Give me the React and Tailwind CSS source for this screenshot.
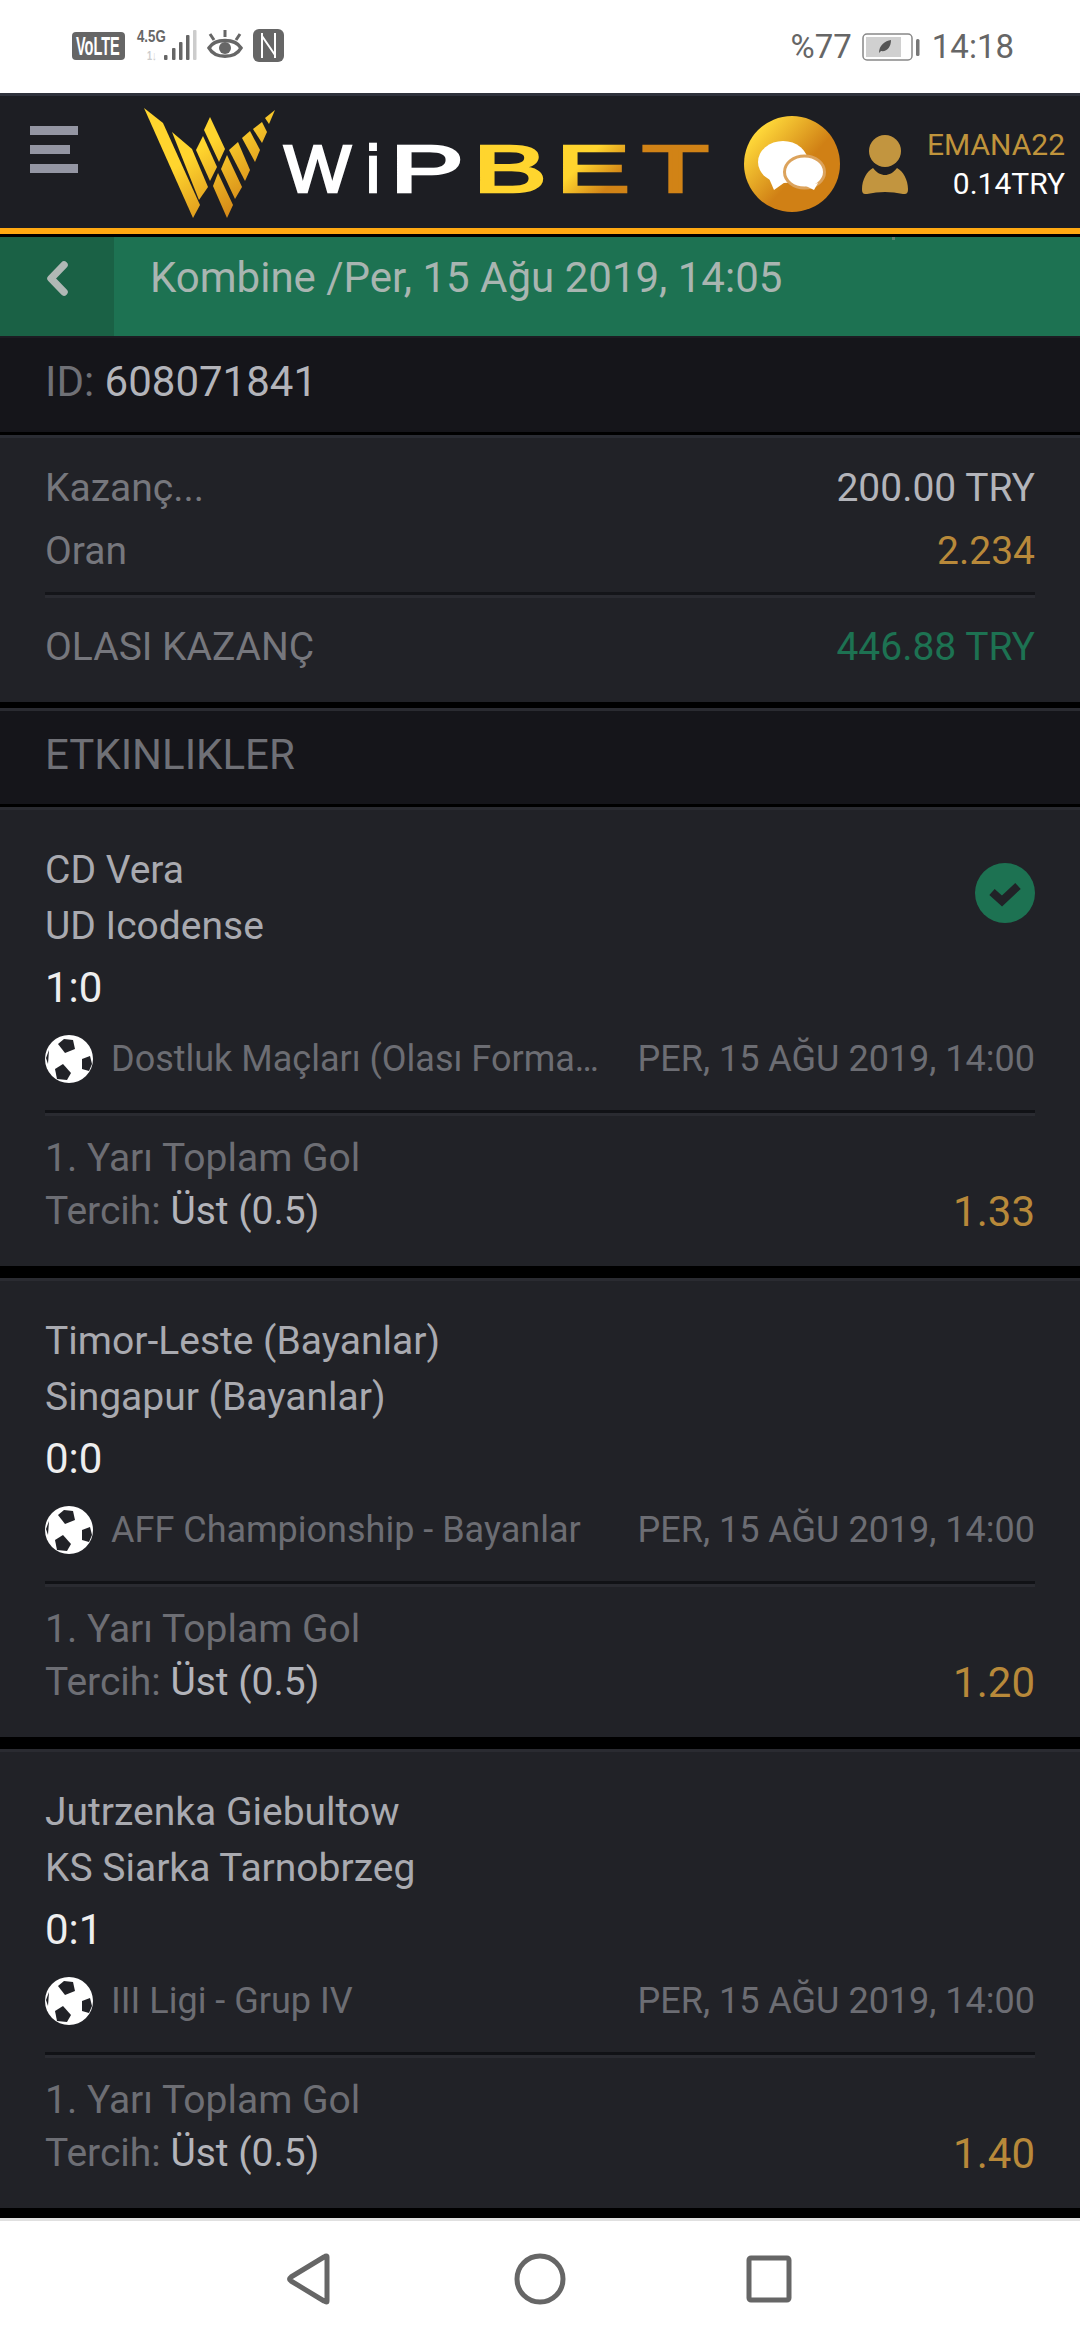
import React from 'react';

const bets = [
  {
    home: 'CD Vera',
    away: 'UD Icodense',
    score: '1:0',
    league: 'Dostluk Maçları (Olası Forma…',
    odd: '1.33',
    won: true,
  },
  {
    home: 'Timor-Leste (Bayanlar)',
    away: 'Singapur (Bayanlar)',
    score: '0:0',
    league: 'AFF Championship - Bayanlar',
    odd: '1.20',
  },
  {
    home: 'Jutrzenka Giebultow',
    away: 'KS Siarka Tarnobrzeg',
    score: '0:1',
    league: 'III Ligi - Grup IV',
    odd: '1.40',
  },
];

// Stripes of the emblem, in page coordinates
const emblem = [
  '144,108 163,123 200,205 193,218',
  '172,132 192,149 208,187 199,200',
  '203,136 196,150 210,181 217,167',
  '210,117 204,130 219,162 225,149',
  '218,173 213,186 227,218 233,205',
  '227,155 221,169 235,199 242,187',
  '238,142 229,150 245,181 250,170',
  '250,131 242,138 255,162 260,150',
  '262,122 253,129 262,143 267,132',
  '275,110 265,118 269,124',
];

const wordmark = [
  { ch: 'W', x: 284, w: 67, fill: '#ffffff' },
  { ch: 'i', x: 366, w: 14, fill: '#ffffff' },
  { ch: 'P', x: 390, w: 74, fill: '#ffffff' },
  { ch: 'B', x: 473, w: 74, fill: '#ffd52e' },
  { ch: 'E', x: 556, w: 74, fill: 'url(#wipE)' },
  { ch: 'T', x: 642, w: 67, fill: '#d18316' },
];

const StatusBar = () => (
  <div className="flex h-[93px] items-start justify-between bg-white pl-[72px] pr-[66px]">
    <svg width="212" height="56" viewBox="72 16 212 56" className="mt-[16px] overflow-visible">
      <rect x="72" y="32" width="53" height="28" rx="4" fill="#666666" />
      <text transform="translate(76 55) scale(0.58 1)" fill="#ffffff" fontFamily="Liberation Sans" fontWeight="700" fontSize="25">VoLTE</text>
      <text transform="translate(137 42) scale(0.78 1)" fill="#666666" fontFamily="Liberation Sans" fontWeight="700" fontSize="17">4.5G</text>
      <text transform="translate(147 60) scale(0.7 1)" fill="#cccccc" fontFamily="Liberation Sans" fontWeight="700" fontSize="13">1↓</text>
      <rect x="164" y="55" width="3.5" height="5" rx="1" fill="#666666" />
      <rect x="172" y="48" width="3.5" height="12" rx="1" fill="#666666" />
      <rect x="179" y="42" width="3.5" height="18" rx="1" fill="#666666" />
      <rect x="186" y="35" width="3.5" height="25" rx="1" fill="#666666" />
      <rect x="193" y="30" width="3.5" height="30" rx="1" fill="#cccccc" />
      <path d="M209 48 C215 38 235 38 241 48 C235 59 215 59 209 48 Z" fill="none" stroke="#666666" strokeWidth="3.5" />
      <circle cx="225" cy="48" r="6" fill="#666666" />
      <path d="M225 37 V30 M214 40 L210 34 M236 40 L240 34" stroke="#666666" strokeWidth="3" fill="none" />
      <rect x="253" y="29" width="31" height="33" rx="6" fill="#666666" />
      <path d="M262 33 V58 M275 33 V58 M262 36 L275 55" stroke="#ffffff" strokeWidth="2" fill="none" />
    </svg>
    <div className="mt-[24px] flex items-center text-[33px] leading-[46px] text-[#666666]">
      <span>%77</span>
      <svg width="58" height="28" viewBox="0 0 58 28" className="ml-[10px] mr-[12px]">
        <rect x="1" y="1" width="49" height="26" rx="4" fill="none" stroke="#888888" strokeWidth="1.5" />
        <rect x="4" y="4" width="35" height="20" fill="#d0d0d0" />
        <rect x="54" y="6" width="3.5" height="17" rx="1.5" fill="#777777" />
        <path d="M17 20 C17 12 23 8 29 7 C29 14 25 19 19 18 Z" fill="#555555" />
      </svg>
      <span>14:18</span>
    </div>
  </div>
);

const Header = () => (
  <div className="flex h-[135px] items-start border-t-[3px] border-[#2f323c] bg-[#1d1e23] pl-[30px] pr-[15px]">
    <div className="mt-[30px] flex w-[48px] flex-col gap-[10px]">
      <div className="h-[9px] w-[48px] bg-[#9496a3]" />
      <div className="h-[9px] w-[40px] bg-[#9496a3]" />
      <div className="h-[9px] w-[48px] bg-[#9496a3]" />
    </div>
    <svg width="575" height="132" viewBox="140 96 575 132" className="ml-[62px]">
      <defs>
        <linearGradient id="wipGold" gradientUnits="userSpaceOnUse" x1="170" y1="120" x2="240" y2="215">
          <stop offset="0.35" stopColor="#ffd52e" />
          <stop offset="1" stopColor="#d18316" />
        </linearGradient>
        <linearGradient id="wipE" gradientUnits="userSpaceOnUse" x1="585" y1="160" x2="610" y2="185">
          <stop offset="0" stopColor="#ffd52e" />
          <stop offset="1" stopColor="#d18316" />
        </linearGradient>
      </defs>
      {emblem.map((points) => (
        <polygon key={points} points={points} fill="url(#wipGold)" />
      ))}
      {wordmark.map((l) => (
        <text
          key={l.ch}
          x={l.x}
          y="192"
          fontFamily="Liberation Sans"
          fontSize="67"
          fill={l.fill}
          stroke={l.fill}
          strokeWidth="2.5"
          textLength={l.w}
          lengthAdjust="spacingAndGlyphs"
        >
          {l.ch}
        </text>
      ))}
    </svg>
    <svg width="96" height="96" viewBox="0 0 96 96" className="ml-[29px] mt-[20px]">
      <defs>
        <linearGradient id="chatGold" x1="0.1" y1="0.1" x2="0.6" y2="0.55">
          <stop offset="0.1" stopColor="#ffd93a" />
          <stop offset="1" stopColor="#d08015" />
        </linearGradient>
      </defs>
      <circle cx="48" cy="48" r="48" fill="url(#chatGold)" />
      <ellipse cx="39" cy="46" rx="25" ry="21" fill="#ffffff" />
      <path d="M24 60 L30 74 L44 64 Z" fill="#ffffff" />
      <ellipse cx="60.5" cy="56" rx="20" ry="16" fill="#ffffff" stroke="#dca35c" strokeWidth="3" />
      <path d="M62 70 L70 74 L74 67 Z" fill="#ffffff" />
    </svg>
    <svg width="48" height="62" viewBox="0 0 48 62" className="ml-[21px] mt-[38px]">
      <circle cx="24" cy="17" r="16" fill="#c2953f" />
      <path d="M1 55 C1 46 6 37 12 34 C16 39 20 41 24 41 C28 41 32 39 36 34 C42 37 47 46 47 55 C47 60 45 60 42 60 Q24 56 6 60 C3 60 1 60 1 55 Z" fill="#c2953f" />
    </svg>
    <div className="ml-auto mt-[29px] text-right text-[30px] leading-[39px]">
      <div className="text-[#c0943c]">EMANA22</div>
      <div className="text-white">0.14TRY</div>
    </div>
  </div>
);

const TitleBar = () => (
  <div className="relative flex h-[99px] bg-[#1d7252]">
    <div className="flex w-[114px] items-center justify-center bg-[#1a6145] pb-[17px]">
      <svg width="21" height="35" viewBox="0 0 21 35">
        <path d="M17 4 L4 17.5 L17 31" fill="none" stroke="#b0b8b5" strokeWidth="7.5" strokeLinecap="round" strokeLinejoin="round" />
      </svg>
    </div>
    <div className="pl-[36px] pt-[14px] text-[42px] leading-[54px] text-[#a9b5b1]">Kombine /Per, 15 Ağu 2019, 14:05</div>
    <div className="absolute left-[892px] top-0 h-[3px] w-[3px] bg-[#5f7f72]" />
  </div>
);

const Divider = () => (
  <div className="h-[6px] border-b-[3px] border-[#2a2b31] bg-[#141519]" />
);

const Row = ({ label, value, color }) => (
  <div className="flex items-center justify-between text-[39px] leading-[63px]">
    <span className="text-[#76777d]">{label}</span>
    <span className={color}>{value}</span>
  </div>
);

const Summary = () => (
  <>
    <div className="h-[96px] border-t-2 border-[#1c1c22] bg-[#15151a] px-[45px] pt-[15px] text-[42px] leading-[58px]">
      <span className="text-[#6f7076]">ID: </span>
      <span className="text-[#b3b4ba]">608071841</span>
    </div>
    <div className="h-[3px] bg-black" />
    <div className="h-[267px] border-t-[3px] border-[#2a2c33] bg-[#212227] px-[45px] pt-[19px]">
      <Row label="Kazanç..." value="200.00 TRY" color="text-[#b3b4ba]" />
      <Row label="Oran" value="2.234" color="text-[#b8893a]" />
      <div className="mb-[18px] mt-[9px]">
        <Divider />
      </div>
      <Row label="OLASI KAZANÇ" value="446.88 TRY" color="text-[#1d7252]" />
    </div>
    <div className="h-[6px] bg-black" />
    <div className="flex h-[96px] items-center border-t-[3px] border-[#2a2b31] bg-[#15151a] px-[45px] pb-[6px] text-[42px] leading-[58px] text-[#6f7076]">
      ETKINLIKLER
    </div>
  </>
);

const Ball = () => (
  <svg width="48" height="48" viewBox="0 0 48 48" className="shrink-0">
    <circle cx="24" cy="24" r="24" fill="#ffffff" />
    <polygon points="13,9 19,4 28,5 30,14 20,18" fill="#212227" />
    <polygon points="37,24 45,21 47,29 44,36 37,34" fill="#212227" />
    <polygon points="10,34 18,29 26,38 22,45 12,44" fill="#212227" />
    <polygon points="1,23 4,15 3,29" fill="#212227" />
  </svg>
);

const BetCard = ({ bet }) => (
  <div className="h-[459px] border-t-[3px] border-[#2a2b31] bg-[#212227] px-[45px] pt-[32px]">
    <div className="flex items-start justify-between">
      <div className="text-[39px] leading-[56px] text-[#a9aab0]">
        <div>{bet.home}</div>
        <div>{bet.away}</div>
      </div>
      {bet.won && (
        <svg width="60" height="60" viewBox="0 0 60 60" className="mt-[21px]">
          <circle cx="30" cy="30" r="30" fill="#1d7252" />
          <path d="M17 29 L27 38 L43 23" fill="none" stroke="#212227" strokeWidth="8" />
        </svg>
      )}
    </div>
    <div className="mt-[6px] text-[42px] leading-[56px] text-[#eeeeee]">{bet.score}</div>
    <div className="mt-[19px] flex h-[48px] items-center justify-between text-[36px] text-[#6c6d73]">
      <div className="flex items-center gap-[18px]">
        <Ball />
        <span>{bet.league}</span>
      </div>
      <span>PER, 15 AĞU 2019, 14:00</span>
    </div>
    <div className="mt-[27px] h-[6px] border-b-[3px] border-[#2a2b31] bg-[#111216]" />
    <div className="pt-[16px] text-[39px] leading-[53px] text-[#6d6e74]">
      <div>1. Yarı Toplam Gol</div>
      <div className="flex items-center justify-between">
        <div>
          Tercih: <span className="text-[#b3b4ba]">Üst (0.5)</span>
        </div>
        <span className="text-[42px] text-[#b8893a]">{bet.odd}</span>
      </div>
    </div>
  </div>
);

const NavBar = () => (
  <div className="flex h-[122px] items-start border-t-[3px] border-[#e0e0e0] bg-white">
    <svg width="1080" height="70" viewBox="0 2240 1080 70" className="mt-[19px]">
      <path d="M327 2257 V2301 Q327 2303 324 2301 L291 2281 Q288 2279 291 2277 L324 2257 Q327 2255 327 2257 Z" fill="none" stroke="#666666" strokeWidth="5" strokeLinejoin="round" />
      <circle cx="540" cy="2279" r="23" fill="none" stroke="#666666" strokeWidth="5" />
      <rect x="749" y="2258" width="40" height="42" rx="2" fill="none" stroke="#666666" strokeWidth="5" />
    </svg>
  </div>
);

export default function App() {
  return (
    <div className="h-[2340px] w-[1080px] overflow-hidden bg-black [font-family:Roboto,sans-serif]">
      <StatusBar />
      <Header />
      <div className="h-[6px] bg-[#ffa912]" />
      <div className="h-[3px] bg-black" />
      <TitleBar />
      <Summary />
      <div className="h-[3px] bg-black" />
      <div className="flex flex-col gap-[12px]">
        {bets.map((bet) => (
          <BetCard key={bet.home} bet={bet} />
        ))}
      </div>
      <div className="h-[10px] bg-black" />
      <NavBar />
    </div>
  );
}
